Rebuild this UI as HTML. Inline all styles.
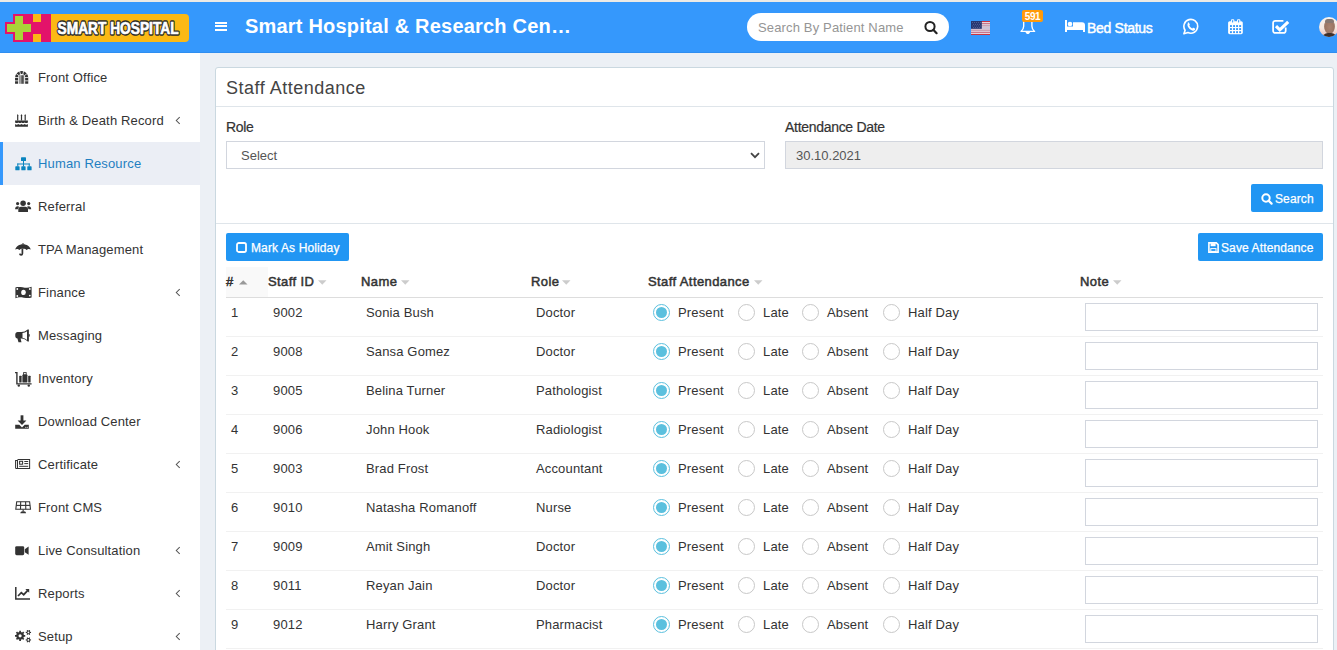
<!DOCTYPE html>
<html><head><meta charset="utf-8">
<style>
*{box-sizing:border-box;margin:0;padding:0}
html,body{width:1337px;height:650px;overflow:hidden;background:#ecf0f5;font-family:"Liberation Sans",sans-serif;color:#333}
.abs{position:absolute}
#topline{position:absolute;left:0;top:0;width:1337px;height:2px;background:#eceae6}
#hdr{position:absolute;left:0;top:2px;width:1337px;height:51px;background:#3598fc;border-bottom:1px solid #2f8ef0}
#side{position:absolute;left:0;top:53px;width:200px;height:597px;background:#fff}
.mi{position:absolute;left:0;width:200px;height:43px;font-size:13px;color:#333;letter-spacing:0.15px}
.mi .t{position:absolute;left:38px;top:14px;line-height:16px;white-space:nowrap}
.mi.act{background:#ebeef5;color:#1f7fc1}
.mi.act:before{content:"";position:absolute;left:0;top:0;width:3px;height:43px;background:#3598fc}
.mi svg.ic{position:absolute;left:15px;top:15px}
.chev{position:absolute;left:175px;top:17px}
#box{position:absolute;left:215px;top:67px;width:1119px;height:600px;background:#fff;border:1px solid #cad8e0;border-radius:3px}
.lbl{font-size:14px;font-weight:400;color:#333;line-height:16px;white-space:nowrap;letter-spacing:-0.3px;-webkit-text-stroke:0.2px #333}
.inp{border:1px solid #d2d6de;font-size:13px;color:#555;line-height:16px;white-space:nowrap;background:#fff}
.btn{background:#2196f3;border-radius:2px;color:#fff;font-size:12px;line-height:16px;white-space:nowrap;-webkit-text-stroke:0.25px #fff;letter-spacing:0.12px}
.th{font-size:13px;font-weight:400;color:#333;line-height:16px;white-space:nowrap;-webkit-text-stroke:0.5px #333;letter-spacing:0.4px}
.td{font-size:13px;color:#333;line-height:16px;white-space:nowrap;letter-spacing:0.15px}
.radio{width:17px;height:17px;border-radius:50%;border:1px solid #c8c8c8;background:#fff}
.radio.on{border-color:#5bc0de}
.radio.on:after{content:"";position:absolute;left:2px;top:2px;width:11px;height:11px;border-radius:50%;background:#5bc0de}
.note{width:233px;height:28px;border:1px solid #d2d6de;background:#fff}
</style></head><body>
<div id="topline"></div>
<div id="hdr">
<!-- logo -->
<svg class="abs" style="left:5px;top:10px" width="186" height="30" viewBox="0 0 186 30">
  <rect x="8" y="2" width="38" height="28" fill="#e3136a"/>
  <rect x="0" y="10" width="12" height="12" fill="#e3136a"/>
  <path d="M46 2 H180 a4 4 0 0 1 4 4 V26 a4 4 0 0 1 -4 4 H46 Z" fill="#fbb915"/>
  <rect x="28" y="2" width="8" height="8" fill="#fbb915"/>
  <rect x="28" y="22" width="8" height="8" fill="#fbb915"/>
  <rect x="10" y="4" width="8" height="24" fill="#a9d638"/>
  <rect x="2" y="12" width="24" height="8" fill="#a9d638"/>
  <text x="52.6" y="22.4" font-family="Liberation Sans" font-weight="700" font-size="17" fill="#2a2a2a" stroke="#2a2a2a" stroke-width="3.3" stroke-linejoin="round" textLength="121" lengthAdjust="spacingAndGlyphs">SMART HOSPITAL</text><text x="52.6" y="22.4" font-family="Liberation Sans" font-weight="700" font-size="17" fill="#fff" stroke="#fff" stroke-width="0.7" textLength="121" lengthAdjust="spacingAndGlyphs">SMART HOSPITAL</text>
</svg>
<!-- hamburger -->
<div class="abs" style="left:215px;top:20px;width:12px;height:2px;background:#fff"></div>
<div class="abs" style="left:215px;top:23px;width:12px;height:2px;background:#fff"></div>
<div class="abs" style="left:215px;top:27px;width:12px;height:2px;background:#fff"></div>
<div class="abs" style="left:245px;top:12px;font-size:20px;font-weight:700;color:#fff;line-height:24px;letter-spacing:0.2px;white-space:nowrap">Smart Hospital &amp; Research Cen…</div>
<!-- search -->
<div class="abs" style="left:747px;top:11px;width:202px;height:28px;background:#fff;border-radius:14px"></div>
<div class="abs" style="left:758px;top:18px;font-size:13px;color:#959595;line-height:16px;white-space:nowrap;letter-spacing:0.15px">Search By Patient Name</div>
<svg class="abs" style="left:922px;top:16px" width="18" height="18" viewBox="0 0 18 18"><circle cx="8" cy="8.5" r="4.6" fill="none" stroke="#222" stroke-width="2"/><line x1="11.3" y1="11.8" x2="14.6" y2="15.2" stroke="#222" stroke-width="2.2" stroke-linecap="round"/></svg>
<!-- flag -->
<svg class="abs" style="left:971px;top:19px" width="19" height="14" viewBox="0 0 19 14">
 <rect width="19" height="14" fill="#e6e6f0"/>
 <rect y="0" width="19" height="1.1" fill="#cc3340"/><rect y="2.15" width="19" height="1.1" fill="#c46478"/><rect y="4.3" width="19" height="1.1" fill="#b9869c"/><rect y="6.45" width="19" height="1.1" fill="#bba7c0"/><rect y="8.6" width="19" height="1.1" fill="#bf8298"/><rect y="10.75" width="19" height="1.1" fill="#c4607a"/><rect y="12.9" width="19" height="1.1" fill="#cc3340"/>
 <rect width="10.8" height="7.8" fill="#263670"/>
 <g fill="#7d86b0"><circle cx="1.5" cy="1.5" r="0.45"/><circle cx="3.5" cy="1.5" r="0.45"/><circle cx="5.5" cy="1.5" r="0.45"/><circle cx="7.5" cy="1.5" r="0.45"/><circle cx="9.5" cy="1.5" r="0.45"/>
 <circle cx="2.5" cy="3.2" r="0.45"/><circle cx="4.5" cy="3.2" r="0.45"/><circle cx="6.5" cy="3.2" r="0.45"/><circle cx="8.5" cy="3.2" r="0.45"/>
 <circle cx="1.5" cy="4.9" r="0.45"/><circle cx="3.5" cy="4.9" r="0.45"/><circle cx="5.5" cy="4.9" r="0.45"/><circle cx="7.5" cy="4.9" r="0.45"/><circle cx="9.5" cy="4.9" r="0.45"/>
 <circle cx="2.5" cy="6.5" r="0.45"/><circle cx="4.5" cy="6.5" r="0.45"/><circle cx="6.5" cy="6.5" r="0.45"/><circle cx="8.5" cy="6.5" r="0.45"/></g>
</svg>
<!-- bell -->
<svg class="abs" style="left:1019px;top:16px" width="18" height="18" viewBox="0 0 18 18">
 <path d="M4.7 3 V8.3 C4.7 10.4 3.6 12 2 13.4 H15.6 C14 12 12.9 10.4 12.9 8.3 V3" fill="none" stroke="#fff" stroke-width="1.35" stroke-linejoin="round"/>
 <path d="M6.2 13.8 H11.4 L10.2 15.5 Q8.8 16.7 7.4 15.5Z" fill="#fff"/>
</svg>
<div class="abs" style="left:1022px;top:8px;width:21px;height:12px;background:#ff9a0a;border-radius:2px;color:#fff;font-size:10px;font-weight:700;line-height:14px;text-align:center;letter-spacing:-0.4px">591</div>
<!-- bed -->
<svg class="abs" style="left:1065px;top:18px" width="20" height="12" viewBox="0 0 20 12">
 <rect x="0" y="0" width="2" height="12" fill="#fff"/>
 <circle cx="5" cy="4" r="2.3" fill="#fff"/>
 <path d="M8 2.2 H17 a3 3 0 0 1 3 3 V12 H18 V10 H2 V6.6 H8 Z" fill="#fff"/>
</svg>
<div class="abs" style="left:1087px;top:18px;font-size:14px;font-weight:400;color:#fff;line-height:16px;white-space:nowrap;letter-spacing:-0.3px;-webkit-text-stroke:0.45px #fff">Bed Status</div>
<!-- whatsapp -->
<svg class="abs" style="left:1182px;top:16px" width="18" height="18" viewBox="0 0 18 18">
 <path d="M1.9 15.7 L3.1 12.2 A6.9 6.9 0 1 1 6 14.6 Z" fill="none" stroke="#fff" stroke-width="1.6" stroke-linejoin="round"/>
 <path d="M5.6 4.9 c0.5-0.6 1.2-0.6 1.5 0 l0.7 1.5 c0.15 0.35 0 0.6-0.3 0.9 c-0.25 0.25-0.25 0.45 0 0.8 c0.6 1 1.3 1.7 2.3 2.2 c0.3 0.15 0.55 0.1 0.75-0.15 c0.3-0.4 0.55-0.5 0.95-0.3 l1.4 0.7 c0.45 0.2 0.45 0.7 0.1 1.2 c-0.6 0.9-1.7 1.2-2.8 0.75 c-2-0.85-3.5-2.2-4.4-4.1 c-0.5-1.05-0.45-2.35 0.2-3.3z" fill="#fff"/>
</svg>
<!-- calendar -->
<svg class="abs" style="left:1228px;top:16px" width="16" height="18" viewBox="0 0 16 18">
 <rect x="0.1" y="3.2" width="14.7" height="13" rx="1.6" fill="#fff"/>
 <rect x="3" y="1.3" width="3.3" height="3" rx="1" fill="#fff"/><rect x="9" y="1.3" width="3.3" height="3" rx="1" fill="#fff"/>
 <g fill="#3598fc"><rect x="4.1" y="1.9" width="1.1" height="2.6" rx="0.5"/><rect x="10.1" y="1.9" width="1.1" height="2.6" rx="0.5"/>
 <rect x="2" y="7.1" width="1.9" height="1.9"/><rect x="5.1" y="7.1" width="1.9" height="1.9"/><rect x="8.1" y="7.1" width="1.9" height="1.9"/><rect x="11.2" y="7.1" width="1.9" height="1.9"/>
 <rect x="2" y="10.1" width="1.9" height="1.9"/><rect x="5.1" y="10.1" width="1.9" height="1.9"/><rect x="8.1" y="10.1" width="1.9" height="1.9"/><rect x="11.2" y="10.1" width="1.9" height="1.9"/>
 <rect x="2" y="13.2" width="1.9" height="1.9"/><rect x="5.1" y="13.2" width="1.9" height="1.9"/><rect x="8.1" y="13.2" width="1.9" height="1.9"/><rect x="11.2" y="13.2" width="1.9" height="1.9"/></g>
</svg>
<!-- check -->
<svg class="abs" style="left:1272px;top:16px" width="19" height="18" viewBox="0 0 19 18">
 <path d="M11.4 2.8 H3.2 a2.1 2.1 0 0 0 -2.1 2.1 V12.8 a2.1 2.1 0 0 0 2.1 2.1 H11.6 a2.1 2.1 0 0 0 2.1 -2.1 V9.4" fill="none" stroke="#fff" stroke-width="1.75"/>
 <path d="M4 8.2 L7.8 11.9 L16.2 3.9" fill="none" stroke="#fff" stroke-width="3.1" stroke-linecap="butt"/>
</svg>
<!-- avatar -->
<div class="abs" style="left:1319px;top:15px;width:20px;height:20px;border-radius:50%;overflow:hidden;background:linear-gradient(180deg,#f8f3ee 0,#f5e9e2 55%,#eccbc4 85%,#dcb4aa 100%)">
 <div class="abs" style="left:5px;top:2px;width:11px;height:15px;border-radius:50%;background:radial-gradient(ellipse at 50% 55%,#a98472 0,#9b7664 55%,#b59a8c 85%,rgba(240,225,215,0) 100%)"></div>
 <div class="abs" style="left:6px;top:2px;width:9px;height:4px;border-radius:5px 5px 2px 2px;background:#867872;filter:blur(0.4px)"></div>
 <div class="abs" style="left:3px;top:16px;width:15px;height:6px;border-radius:7px 7px 0 0;background:#3f302a"></div>
</div>
</div>
</div>
</div>
<div id="side">
<div class="mi" style="top:3px"><svg class="ic" width="14" height="14" viewBox="0 0 14 14"><path d="M0.05 12.8 V6.60 A6.6 6.6 0 0 1 13.25 6.60 V12.8 H10.15 V6.60 A3.5 3.5 0 0 0 3.15 6.60 V12.8 Z" fill="#333"/><line x1="9.24" y1="4.72" x2="12.23" y2="2.54" stroke="#fff" stroke-width="0.8"/><line x1="7.64" y1="3.56" x2="8.78" y2="0.04" stroke="#fff" stroke-width="0.8"/><line x1="5.66" y1="3.56" x2="4.52" y2="0.04" stroke="#fff" stroke-width="0.8"/><line x1="4.06" y1="4.72" x2="1.07" y2="2.54" stroke="#fff" stroke-width="0.8"/><rect x="-0.2" y="6.2" width="3.6" height="0.75" fill="#fff"/><rect x="9.9" y="6.2" width="3.6" height="0.75" fill="#fff"/><rect x="-0.2" y="9.5" width="3.6" height="0.75" fill="#fff"/><rect x="9.9" y="9.5" width="3.6" height="0.75" fill="#fff"/><rect x="4.5" y="4.2" width="0.85" height="8.6" fill="#333"/><rect x="5.85" y="4.2" width="0.85" height="8.6" fill="#333"/><rect x="7.0" y="4.2" width="0.85" height="8.6" fill="#333"/><rect x="8.3" y="4.2" width="0.85" height="8.6" fill="#333"/></svg><span class="t">Front Office</span></div>
<div class="mi" style="top:46px"><svg class="ic" width="14" height="14" viewBox="0 0 14 14"><g fill="#333">
   <path d="M2.1 6.4 V1.2 L2.7 0 L3.3 1.2 V6.4Z"/><path d="M5.9 6.4 V1.2 L6.5 0 L7.1 1.2 V6.4Z"/><path d="M9.6 6.4 V1.2 L10.2 0 L10.8 1.2 V6.4Z"/>
   <path d="M0.1 6.4 H12.9 V8.5 C11.8 9.2 10.8 9.2 9.7 8.5 C8.6 9.2 7.6 9.2 6.5 8.5 C5.4 9.2 4.4 9.2 3.3 8.5 C2.2 9.2 1.2 9.2 0.1 8.5Z"/>
   <path d="M0.1 10.1 C1.2 10.8 2.2 10.8 3.3 10.1 C4.4 10.8 5.4 10.8 6.5 10.1 C7.6 10.8 8.6 10.8 9.7 10.1 C10.8 10.8 11.8 10.8 12.9 10.1 V12.8 H0.1Z"/></g></svg><span class="t">Birth &amp; Death Record</span><svg class="chev" width="6" height="9" viewBox="0 0 6 9"><path d="M4.7 1.1 L1.3 4.5 L4.7 7.9" fill="none" stroke="#555" stroke-width="1.05"/></svg></div>
<div class="mi act" style="top:89px"><svg class="ic" width="17" height="14" viewBox="0 0 17 14"><g fill="#0a84bf">
   <rect x="6" y="0.3" width="5" height="3.8" rx="0.6"/><rect x="8" y="4" width="1" height="3"/><rect x="2.3" y="6.5" width="12.4" height="1"/>
   <rect x="2.3" y="6.5" width="1" height="3"/><rect x="13.7" y="6.5" width="1" height="3"/><rect x="8" y="6.5" width="1" height="3"/>
   <rect x="0.3" y="9.3" width="4.3" height="4" rx="0.6"/><rect x="6.3" y="9.3" width="4.3" height="4" rx="0.6"/><rect x="12.3" y="9.3" width="4.3" height="4" rx="0.6"/></g></svg><span class="t">Human Resource</span></div>
<div class="mi" style="top:132px"><svg class="ic" width="17" height="14" viewBox="0 0 17 14"><g fill="#333">
   <circle cx="8.1" cy="3.2" r="2.75"/><circle cx="2.6" cy="3.6" r="1.6"/><circle cx="13.7" cy="3.6" r="1.6"/>
   <path d="M3.3 11.9 V9.1 C3.3 7.7 4.5 6.8 5.9 6.8 H10.4 C11.8 6.8 13 7.7 13 9.1 V11.9 Z"/>
   <path d="M0.1 9.3 C0.1 7.5 1.1 6.3 2.7 6.3 C3.4 6.3 4 6.5 4.4 6.9 C3.4 7.5 2.9 8.3 2.8 9.3Z"/>
   <path d="M16.2 9.3 C16.2 7.5 15.2 6.3 13.6 6.3 C12.9 6.3 12.3 6.5 11.9 6.9 C12.9 7.5 13.4 8.3 13.5 9.3Z"/></g></svg><span class="t">Referral</span></div>
<div class="mi" style="top:175px"><svg class="ic" width="16" height="15" viewBox="0 0 16 15"><g fill="#333">
   <rect x="7.5" y="0" width="1" height="1.6"/>
   <path d="M0.2 6.6 C1 3.3 4.2 1.2 8 1.2 C11.8 1.2 15 3.3 15.8 6.6 C15 6 14.2 5.8 13.4 6 C12.6 6.2 12 6.5 11.5 7 C10.9 6.2 10 5.8 9 5.8 C8.6 5.8 8.3 5.9 8 6 C7.7 5.9 7.4 5.8 7 5.8 C6 5.8 5.1 6.2 4.5 7 C4 6.5 3.4 6.2 2.6 6 C1.8 5.8 1 6 0.2 6.6Z"/></g>
   <path d="M7.4 6 V10.6 C7.4 12.3 5 12.4 4.8 10.7" fill="none" stroke="#333" stroke-width="1.7"/></svg><span class="t">TPA Management</span></div>
<div class="mi" style="top:218px"><svg class="ic" width="17" height="13" viewBox="0 0 17 13"><path d="M0.4 1.5 C5 -0.3 11 3.3 16.6 0.8 V11.5 C11.8 13.5 5.4 9.8 0.4 12.2Z" fill="#333"/>
   <ellipse cx="8.5" cy="6.4" rx="2.3" ry="2.6" fill="#fff"/><circle cx="2.3" cy="3" r="0.9" fill="#fff"/><circle cx="14.8" cy="9.6" r="0.9" fill="#fff"/><circle cx="14.8" cy="3" r="0.9" fill="#fff"/><circle cx="2.3" cy="10" r="0.9" fill="#fff"/></svg><span class="t">Finance</span><svg class="chev" width="6" height="9" viewBox="0 0 6 9"><path d="M4.7 1.1 L1.3 4.5 L4.7 7.9" fill="none" stroke="#555" stroke-width="1.05"/></svg></div>
<div class="mi" style="top:261px"><svg class="ic" width="15" height="14" viewBox="0 0 16 14" preserveAspectRatio="none"><g fill="#333">
   <path d="M13.5 0.5 L14.8 0.5 V12.6 H13.5 C11.5 10.6 9.2 9.4 6.8 9.4 H6 L6.9 13.2 H3.7 L2.6 9.4 C1.2 9.3 0.3 8.3 0.3 7 V5.4 C0.3 4 1.4 3 2.8 3 H6.8 C9.2 3 11.5 2.2 13.5 0.5Z"/></g>
   <path d="M8 4 C9.8 3.8 11.2 3.2 12.8 2.2 V10.9 C11.2 9.8 9.8 9.2 8 8.7Z" fill="#fff"/><rect x="14.2" y="5" width="1.5" height="2.8" rx="0.7" fill="#333"/></svg><span class="t">Messaging</span></div>
<div class="mi" style="top:304px"><svg class="ic" width="17" height="15" viewBox="0 0 17 15"><g fill="#333">
   <path d="M0 0 H2.6 V11.2 H16.6 V12.6 H1.2 V1.3 H0Z"/><circle cx="3.8" cy="13.6" r="1.2"/><circle cx="13.8" cy="13.6" r="1.2"/>
   <rect x="4.2" y="3.7" width="2.4" height="6.8" rx="0.6"/><rect x="7.4" y="2.6" width="5" height="7.9" rx="0.6"/><rect x="13.2" y="3.7" width="2.4" height="6.8" rx="0.6"/></g>
   <rect x="8.6" y="0.6" width="2.6" height="2.4" fill="none" stroke="#333" stroke-width="0.9"/></svg><span class="t">Inventory</span></div>
<div class="mi" style="top:347px"><svg class="ic" width="14" height="14" viewBox="0 0 14 14"><g fill="#333">
   <rect x="5.6" y="0.3" width="2.8" height="6.5"/><path d="M2.6 5.6 H11.4 L7 10 Z"/>
   <path d="M0.2 9.8 H4.3 L7 12.4 L9.7 9.8 H13.8 V13.7 H0.2Z"/></g><circle cx="10.8" cy="12.2" r="0.55" fill="#fff"/><circle cx="12.3" cy="12.2" r="0.55" fill="#fff"/></svg><span class="t">Download Center</span></div>
<div class="mi" style="top:390px"><svg class="ic" width="16" height="13" viewBox="0 0 16 13"><g fill="none" stroke="#333" stroke-width="1.05">
   <path d="M2.5 1.5 H14.6 V10.4 H1.1 C0.7 10.4 0.6 10.1 0.6 9.7 V2.4 H2.5 V10.2"/><rect x="4.6" y="3.3" width="3" height="2.9"/></g>
   <g fill="#333"><rect x="9.3" y="3" width="3.9" height="1"/><rect x="9.3" y="5.1" width="3.9" height="1"/><rect x="4.2" y="7.8" width="9" height="1"/></g></svg><span class="t">Certificate</span><svg class="chev" width="6" height="9" viewBox="0 0 6 9"><path d="M4.7 1.1 L1.3 4.5 L4.7 7.9" fill="none" stroke="#555" stroke-width="1.05"/></svg></div>
<div class="mi" style="top:433px"><svg class="ic" width="17" height="14" viewBox="0 0 17 14"><g fill="none" stroke="#333" stroke-width="1.1">
   <path d="M1.7 0.7 H14.6 L15.5 8.3 H0.8Z"/><path d="M1.2 4.4 H15.1"/><path d="M5.7 0.7 L5.5 8.3"/><path d="M10.6 0.7 L10.8 8.3"/></g>
   <g fill="#333"><rect x="7.6" y="8.5" width="1.1" height="1.8"/><path d="M5.3 12.3 C5.4 11 6.3 10.2 7.4 10.2 H9 C10.1 10.2 11 11 11.1 12.3Z"/></g></svg><span class="t">Front CMS</span></div>
<div class="mi" style="top:476px"><svg class="ic" width="15" height="13" viewBox="0 0 15 13"><g fill="#333">
   <rect x="0.2" y="2.2" width="9" height="9" rx="1.4"/><path d="M9.8 5.2 L13.6 2.6 V10.8 L9.8 8.2Z"/></g></svg><span class="t">Live Consultation</span><svg class="chev" width="6" height="9" viewBox="0 0 6 9"><path d="M4.7 1.1 L1.3 4.5 L4.7 7.9" fill="none" stroke="#555" stroke-width="1.05"/></svg></div>
<div class="mi" style="top:519px"><svg class="ic" width="15" height="13" viewBox="0 0 15 13"><g fill="none" stroke="#333" stroke-width="1.5">
   <path d="M0.8 0 V11.9 H15"/><path d="M3 9 L6.3 5.6 L8.7 7.7 L12.8 3.3" stroke-width="1.7"/></g><path d="M10.3 1.9 H14.2 V5.8Z" fill="#333"/></svg><span class="t">Reports</span><svg class="chev" width="6" height="9" viewBox="0 0 6 9"><path d="M4.7 1.1 L1.3 4.5 L4.7 7.9" fill="none" stroke="#555" stroke-width="1.05"/></svg></div>
<div class="mi" style="top:562px"><svg class="ic" width="17" height="13" viewBox="0 0 17 13"><path fill="#333" fill-rule="evenodd" d="M8.70 4.31 L8.91 4.96 L10.22 4.91 L10.22 6.69 L8.91 6.64 L8.70 7.29 L8.38 7.90 L9.35 8.79 L8.09 10.05 L7.20 9.08 L6.59 9.40 L5.94 9.61 L5.99 10.92 L4.21 10.92 L4.26 9.61 L3.61 9.40 L3.00 9.08 L2.11 10.05 L0.85 8.79 L1.82 7.90 L1.50 7.29 L1.29 6.64 L-0.02 6.69 L-0.02 4.91 L1.29 4.96 L1.50 4.31 L1.82 3.70 L0.85 2.81 L2.11 1.55 L3.00 2.52 L3.61 2.20 L4.26 1.99 L4.21 0.68 L5.99 0.68 L5.94 1.99 L6.59 2.20 L7.20 2.52 L8.09 1.55 L9.35 2.81 L8.38 3.70ZM6.70 5.80 A1.6 1.6 0 1 0 3.50 5.80 A1.6 1.6 0 1 0 6.70 5.80Z M15.05 1.45 L15.24 1.91 L16.04 1.84 L16.04 2.96 L15.24 2.89 L15.05 3.35 L14.74 3.74 L15.21 4.41 L14.23 4.97 L13.89 4.24 L13.40 4.30 L12.91 4.24 L12.57 4.97 L11.59 4.41 L12.06 3.74 L11.75 3.35 L11.56 2.89 L10.76 2.96 L10.76 1.84 L11.56 1.91 L11.75 1.45 L12.06 1.06 L11.59 0.39 L12.57 -0.17 L12.91 0.56 L13.40 0.50 L13.89 0.56 L14.23 -0.17 L15.21 0.39 L14.74 1.06ZM14.30 2.40 A0.9 0.9 0 1 0 12.50 2.40 A0.9 0.9 0 1 0 14.30 2.40Z M15.05 8.95 L15.24 9.41 L16.04 9.34 L16.04 10.46 L15.24 10.39 L15.05 10.85 L14.74 11.24 L15.21 11.91 L14.23 12.47 L13.89 11.74 L13.40 11.80 L12.91 11.74 L12.57 12.47 L11.59 11.91 L12.06 11.24 L11.75 10.85 L11.56 10.39 L10.76 10.46 L10.76 9.34 L11.56 9.41 L11.75 8.95 L12.06 8.56 L11.59 7.89 L12.57 7.33 L12.91 8.06 L13.40 8.00 L13.89 8.06 L14.23 7.33 L15.21 7.89 L14.74 8.56ZM14.30 9.90 A0.9 0.9 0 1 0 12.50 9.90 A0.9 0.9 0 1 0 14.30 9.90Z"/></svg><span class="t">Setup</span><svg class="chev" width="6" height="9" viewBox="0 0 6 9"><path d="M4.7 1.1 L1.3 4.5 L4.7 7.9" fill="none" stroke="#555" stroke-width="1.05"/></svg></div>
</div>
<div id="box">
<div class="abs" style="left:10px;top:9px;font-size:18px;line-height:22px;color:#444;letter-spacing:0.5px;white-space:nowrap">Staff Attendance</div>
<div class="abs" style="left:0;top:38px;width:1117px;height:1px;background:#dfe5ea"></div>
<div class="abs lbl" style="left:10px;top:51px">Role</div>
<div class="abs inp" style="left:10px;top:73px;width:539px;height:28px"><span style="position:absolute;left:14px;top:6px">Select</span>
<svg class="abs" style="left:523px;top:10px" width="10" height="7" viewBox="0 0 10 7"><path d="M1 1.2 L5 5.2 L9 1.2" fill="none" stroke="#444" stroke-width="1.8"/></svg></div>
<div class="abs lbl" style="left:569px;top:51px">Attendance Date</div>
<div class="abs inp" style="left:569px;top:73px;width:538px;height:28px;background:#eee"><span style="position:absolute;left:10px;top:6px">30.10.2021</span></div>
<div class="abs btn" style="left:1035px;top:116px;width:72px;height:28px"><svg class="abs" style="left:10px;top:9px" width="12" height="12" viewBox="0 0 12 12"><circle cx="5" cy="5" r="3.7" fill="none" stroke="#fff" stroke-width="2"/><line x1="7.6" y1="7.6" x2="10.6" y2="10.6" stroke="#fff" stroke-width="2.2" stroke-linecap="round"/></svg><span class="abs" style="left:24px;top:7px">Search</span></div>
<div class="abs" style="left:0;top:155px;width:1117px;height:1px;background:#dfe5ea"></div>
<div class="abs btn" style="left:10px;top:165px;width:123px;height:28px"><svg class="abs" style="left:10px;top:9px" width="11" height="11" viewBox="0 0 11 11"><rect x="1" y="1" width="9" height="9" rx="1.8" fill="none" stroke="#fff" stroke-width="1.8"/></svg><span class="abs" style="left:25px;top:7px">Mark As Holiday</span></div>
<div class="abs btn" style="left:982px;top:165px;width:125px;height:28px"><svg class="abs" style="left:10px;top:9px" width="11" height="11" viewBox="0 0 11 11"><path d="M0.9 0.9 H8.3 L10.1 2.7 V10.1 H0.9Z" fill="none" stroke="#fff" stroke-width="1.6"/><rect x="2.6" y="1.2" width="5" height="3" fill="#fff"/><rect x="2.8" y="6.6" width="5.2" height="2.8" fill="none" stroke="#fff" stroke-width="1"/></svg><span class="abs" style="left:23px;top:7px">Save Attendance</span></div>
<div class="abs" style="left:10px;top:199px;width:42px;height:30px;background:#f9f9f9"></div>
<div class="abs" style="left:10px;top:229px;width:1097px;height:1px;background:#ddd"></div>
<svg class="abs" style="left:23px;top:212px" width="9" height="5" viewBox="0 0 9 5"><path d="M0 4.6 L4.25 0.2 L8.5 4.6Z" fill="#999"/></svg>
<svg class="abs" style="left:102px;top:212px" width="9" height="5" viewBox="0 0 9 5"><path d="M0 0.2 L4.25 4.8 L8.5 0.2Z" fill="#ccc"/></svg>
<svg class="abs" style="left:185px;top:212px" width="9" height="5" viewBox="0 0 9 5"><path d="M0 0.2 L4.25 4.8 L8.5 0.2Z" fill="#ccc"/></svg>
<svg class="abs" style="left:346px;top:212px" width="9" height="5" viewBox="0 0 9 5"><path d="M0 0.2 L4.25 4.8 L8.5 0.2Z" fill="#ccc"/></svg>
<svg class="abs" style="left:538px;top:212px" width="9" height="5" viewBox="0 0 9 5"><path d="M0 0.2 L4.25 4.8 L8.5 0.2Z" fill="#ccc"/></svg>
<svg class="abs" style="left:897px;top:212px" width="9" height="5" viewBox="0 0 9 5"><path d="M0 0.2 L4.25 4.8 L8.5 0.2Z" fill="#ccc"/></svg>
<div class="abs th" style="left:10px;top:206px">#</div>
<div class="abs th" style="left:52px;top:206px">Staff ID</div>
<div class="abs th" style="left:145px;top:206px">Name</div>
<div class="abs th" style="left:315px;top:206px">Role</div>
<div class="abs th" style="left:432px;top:206px">Staff Attendance</div>
<div class="abs th" style="left:864px;top:206px">Note</div>
<div class="abs" style="left:10px;top:268px;width:1097px;height:1px;background:#f1f1f1"></div>
<div class="abs td" style="left:15px;top:237px">1</div>
<div class="abs td" style="left:57px;top:237px">9002</div>
<div class="abs td" style="left:150px;top:237px">Sonia Bush</div>
<div class="abs td" style="left:320px;top:237px">Doctor</div>
<div class="abs radio on" style="left:437px;top:236px"></div><div class="abs td" style="left:462px;top:237px">Present</div>
<div class="abs radio" style="left:522px;top:236px"></div><div class="abs td" style="left:547px;top:237px">Late</div>
<div class="abs radio" style="left:586px;top:236px"></div><div class="abs td" style="left:611px;top:237px">Absent</div>
<div class="abs radio" style="left:667px;top:236px"></div><div class="abs td" style="left:692px;top:237px">Half Day</div>
<div class="abs note" style="left:869px;top:235px"></div>
<div class="abs" style="left:10px;top:307px;width:1097px;height:1px;background:#f1f1f1"></div>
<div class="abs td" style="left:15px;top:276px">2</div>
<div class="abs td" style="left:57px;top:276px">9008</div>
<div class="abs td" style="left:150px;top:276px">Sansa Gomez</div>
<div class="abs td" style="left:320px;top:276px">Doctor</div>
<div class="abs radio on" style="left:437px;top:275px"></div><div class="abs td" style="left:462px;top:276px">Present</div>
<div class="abs radio" style="left:522px;top:275px"></div><div class="abs td" style="left:547px;top:276px">Late</div>
<div class="abs radio" style="left:586px;top:275px"></div><div class="abs td" style="left:611px;top:276px">Absent</div>
<div class="abs radio" style="left:667px;top:275px"></div><div class="abs td" style="left:692px;top:276px">Half Day</div>
<div class="abs note" style="left:869px;top:274px"></div>
<div class="abs" style="left:10px;top:346px;width:1097px;height:1px;background:#f1f1f1"></div>
<div class="abs td" style="left:15px;top:315px">3</div>
<div class="abs td" style="left:57px;top:315px">9005</div>
<div class="abs td" style="left:150px;top:315px">Belina Turner</div>
<div class="abs td" style="left:320px;top:315px">Pathologist</div>
<div class="abs radio on" style="left:437px;top:314px"></div><div class="abs td" style="left:462px;top:315px">Present</div>
<div class="abs radio" style="left:522px;top:314px"></div><div class="abs td" style="left:547px;top:315px">Late</div>
<div class="abs radio" style="left:586px;top:314px"></div><div class="abs td" style="left:611px;top:315px">Absent</div>
<div class="abs radio" style="left:667px;top:314px"></div><div class="abs td" style="left:692px;top:315px">Half Day</div>
<div class="abs note" style="left:869px;top:313px"></div>
<div class="abs" style="left:10px;top:385px;width:1097px;height:1px;background:#f1f1f1"></div>
<div class="abs td" style="left:15px;top:354px">4</div>
<div class="abs td" style="left:57px;top:354px">9006</div>
<div class="abs td" style="left:150px;top:354px">John Hook</div>
<div class="abs td" style="left:320px;top:354px">Radiologist</div>
<div class="abs radio on" style="left:437px;top:353px"></div><div class="abs td" style="left:462px;top:354px">Present</div>
<div class="abs radio" style="left:522px;top:353px"></div><div class="abs td" style="left:547px;top:354px">Late</div>
<div class="abs radio" style="left:586px;top:353px"></div><div class="abs td" style="left:611px;top:354px">Absent</div>
<div class="abs radio" style="left:667px;top:353px"></div><div class="abs td" style="left:692px;top:354px">Half Day</div>
<div class="abs note" style="left:869px;top:352px"></div>
<div class="abs" style="left:10px;top:424px;width:1097px;height:1px;background:#f1f1f1"></div>
<div class="abs td" style="left:15px;top:393px">5</div>
<div class="abs td" style="left:57px;top:393px">9003</div>
<div class="abs td" style="left:150px;top:393px">Brad Frost</div>
<div class="abs td" style="left:320px;top:393px">Accountant</div>
<div class="abs radio on" style="left:437px;top:392px"></div><div class="abs td" style="left:462px;top:393px">Present</div>
<div class="abs radio" style="left:522px;top:392px"></div><div class="abs td" style="left:547px;top:393px">Late</div>
<div class="abs radio" style="left:586px;top:392px"></div><div class="abs td" style="left:611px;top:393px">Absent</div>
<div class="abs radio" style="left:667px;top:392px"></div><div class="abs td" style="left:692px;top:393px">Half Day</div>
<div class="abs note" style="left:869px;top:391px"></div>
<div class="abs" style="left:10px;top:463px;width:1097px;height:1px;background:#f1f1f1"></div>
<div class="abs td" style="left:15px;top:432px">6</div>
<div class="abs td" style="left:57px;top:432px">9010</div>
<div class="abs td" style="left:150px;top:432px">Natasha Romanoff</div>
<div class="abs td" style="left:320px;top:432px">Nurse</div>
<div class="abs radio on" style="left:437px;top:431px"></div><div class="abs td" style="left:462px;top:432px">Present</div>
<div class="abs radio" style="left:522px;top:431px"></div><div class="abs td" style="left:547px;top:432px">Late</div>
<div class="abs radio" style="left:586px;top:431px"></div><div class="abs td" style="left:611px;top:432px">Absent</div>
<div class="abs radio" style="left:667px;top:431px"></div><div class="abs td" style="left:692px;top:432px">Half Day</div>
<div class="abs note" style="left:869px;top:430px"></div>
<div class="abs" style="left:10px;top:502px;width:1097px;height:1px;background:#f1f1f1"></div>
<div class="abs td" style="left:15px;top:471px">7</div>
<div class="abs td" style="left:57px;top:471px">9009</div>
<div class="abs td" style="left:150px;top:471px">Amit Singh</div>
<div class="abs td" style="left:320px;top:471px">Doctor</div>
<div class="abs radio on" style="left:437px;top:470px"></div><div class="abs td" style="left:462px;top:471px">Present</div>
<div class="abs radio" style="left:522px;top:470px"></div><div class="abs td" style="left:547px;top:471px">Late</div>
<div class="abs radio" style="left:586px;top:470px"></div><div class="abs td" style="left:611px;top:471px">Absent</div>
<div class="abs radio" style="left:667px;top:470px"></div><div class="abs td" style="left:692px;top:471px">Half Day</div>
<div class="abs note" style="left:869px;top:469px"></div>
<div class="abs" style="left:10px;top:541px;width:1097px;height:1px;background:#f1f1f1"></div>
<div class="abs td" style="left:15px;top:510px">8</div>
<div class="abs td" style="left:57px;top:510px">9011</div>
<div class="abs td" style="left:150px;top:510px">Reyan Jain</div>
<div class="abs td" style="left:320px;top:510px">Doctor</div>
<div class="abs radio on" style="left:437px;top:509px"></div><div class="abs td" style="left:462px;top:510px">Present</div>
<div class="abs radio" style="left:522px;top:509px"></div><div class="abs td" style="left:547px;top:510px">Late</div>
<div class="abs radio" style="left:586px;top:509px"></div><div class="abs td" style="left:611px;top:510px">Absent</div>
<div class="abs radio" style="left:667px;top:509px"></div><div class="abs td" style="left:692px;top:510px">Half Day</div>
<div class="abs note" style="left:869px;top:508px"></div>
<div class="abs" style="left:10px;top:580px;width:1097px;height:1px;background:#f1f1f1"></div>
<div class="abs td" style="left:15px;top:549px">9</div>
<div class="abs td" style="left:57px;top:549px">9012</div>
<div class="abs td" style="left:150px;top:549px">Harry Grant</div>
<div class="abs td" style="left:320px;top:549px">Pharmacist</div>
<div class="abs radio on" style="left:437px;top:548px"></div><div class="abs td" style="left:462px;top:549px">Present</div>
<div class="abs radio" style="left:522px;top:548px"></div><div class="abs td" style="left:547px;top:549px">Late</div>
<div class="abs radio" style="left:586px;top:548px"></div><div class="abs td" style="left:611px;top:549px">Absent</div>
<div class="abs radio" style="left:667px;top:548px"></div><div class="abs td" style="left:692px;top:549px">Half Day</div>
<div class="abs note" style="left:869px;top:547px"></div>

</div>
</body></html>
